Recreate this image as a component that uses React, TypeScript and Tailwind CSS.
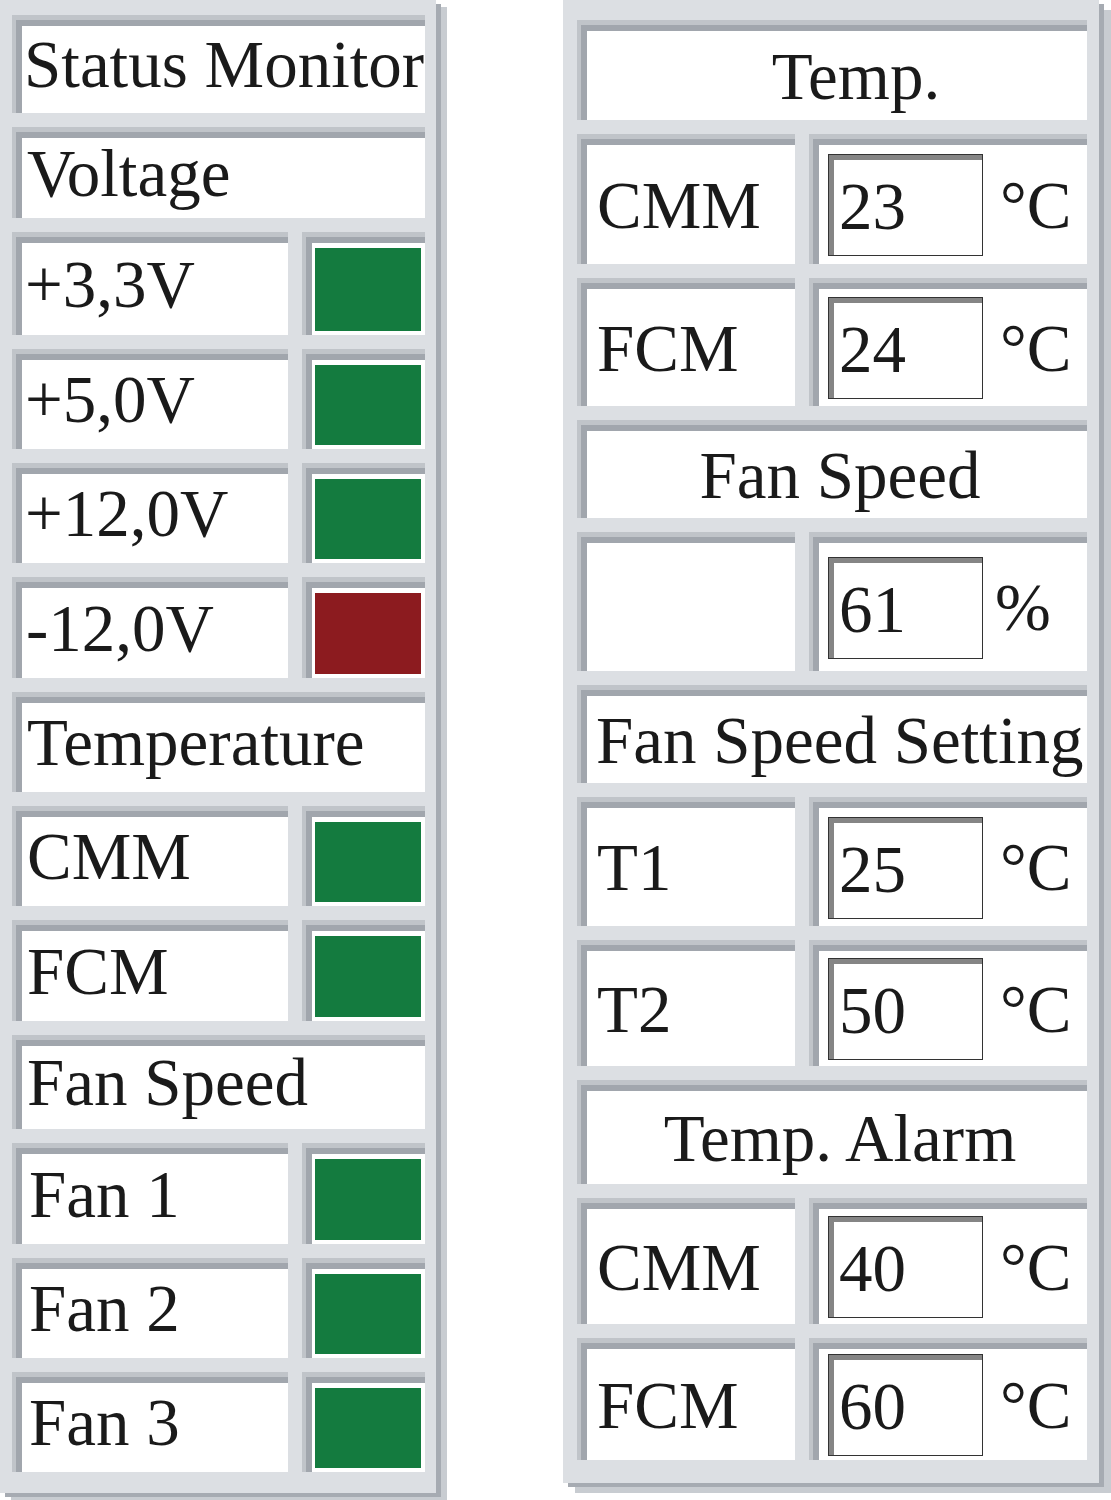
import React from 'react';

type LeftRow = { label: string; status?: 'ok' | 'fail'; h: string; pad?: string };

type RightRow =
  | { kind: 'header'; label: string; h: string; pad: string }
  | { kind: 'value'; label: string; value: string; unit: string; h: string };

const leftRows: LeftRow[] = [
  { label: 'Status Monitor', h: 'h-[98px]', pad: 'pl-[12px]' },
  { label: 'Voltage', h: 'h-[91px]' },
  { label: '+3,3V', status: 'ok', h: 'h-[103px]', pad: 'pl-[13px]' },
  { label: '+5,0V', status: 'ok', h: 'h-[100px]', pad: 'pl-[13px]' },
  { label: '+12,0V', status: 'ok', h: 'h-[100px]', pad: 'pl-[13px]' },
  { label: '-12,0V', status: 'fail', h: 'h-[101px]', pad: 'pl-[14px]' },
  { label: 'Temperature', h: 'h-[100px]' },
  { label: 'CMM', status: 'ok', h: 'h-[100px]' },
  { label: 'FCM', status: 'ok', h: 'h-[101px]' },
  { label: 'Fan Speed', h: 'h-[94px]' },
  { label: 'Fan 1', status: 'ok', h: 'h-[101px]', pad: 'pl-[17px]' },
  { label: 'Fan 2', status: 'ok', h: 'h-[100px]', pad: 'pl-[17px]' },
  { label: 'Fan 3', status: 'ok', h: 'h-[100px]', pad: 'pl-[17px]' },
];

const rightRows: RightRow[] = [
  { kind: 'header', label: 'Temp.', h: 'h-[100px]', pad: 'justify-center pl-[48px]' },
  { kind: 'value', label: 'CMM', value: '23', unit: '°C', h: 'h-[130px]' },
  { kind: 'value', label: 'FCM', value: '24', unit: '°C', h: 'h-[128px]' },
  { kind: 'header', label: 'Fan Speed', h: 'h-[98px]', pad: 'justify-center pl-[16px]' },
  { kind: 'value', label: '', value: '61', unit: '%', h: 'h-[139px]' },
  { kind: 'header', label: 'Fan Speed Setting', h: 'h-[98px]', pad: 'justify-start pl-[19px]' },
  { kind: 'value', label: 'T1', value: '25', unit: '°C', h: 'h-[129px]' },
  { kind: 'value', label: 'T2', value: '50', unit: '°C', h: 'h-[126px]' },
  { kind: 'header', label: 'Temp. Alarm', h: 'h-[104px]', pad: 'justify-center pl-[16px]' },
  { kind: 'value', label: 'CMM', value: '40', unit: '°C', h: 'h-[126px]' },
  { kind: 'value', label: 'FCM', value: '60', unit: '°C', h: 'h-[122px]' },
];

// white cell with the grey inset edge on top and left
const Cell: React.FC<{ className?: string; children?: React.ReactNode }> = ({ className = '', children }) => (
  <div className={`bg-white shadow-[inset_4px_5px_0_#c0c4c9,inset_10px_11px_0_#a1a6ad] ${className}`}>{children}</div>
);

const App: React.FC = () => {
  return (
    <div className="w-[1111px] h-[1500px] bg-white flex items-start font-['Liberation_Serif',serif] text-[#1a1a1a] text-[67px] leading-none">
      {/* Status monitor panel */}
      <div className="w-[436px] h-[1493px] bg-[#dcdfe3] shadow-[5px_4px_0_#a6abb2,11px_7px_0_#c8ccd1] pt-[15px] pl-[12px] pr-[11px] flex flex-col gap-[14px]">
        {leftRows.map((row, i) => (
          <div key={i} className={`flex gap-[14px] ${row.h}`}>
            <Cell className={`flex-1 flex items-center pt-[11px] pb-[10px] whitespace-nowrap ${row.pad ?? 'pl-[15px]'}`}>
              {row.label}
            </Cell>
            {row.status && (
              <Cell className="w-[123px] flex pl-[13px] pr-[4px] pt-[16px] pb-[4px]">
                <div className={`flex-1 ${row.status === 'ok' ? 'bg-[#147b3f]' : 'bg-[#8c1b1f]'}`} />
              </Cell>
            )}
          </div>
        ))}
      </div>

      {/* Settings panel */}
      <div className="ml-[127px] w-[536px] h-[1483px] bg-[#dcdfe3] shadow-[5px_4px_0_#a6abb2,12px_10px_0_#c8ccd1] pt-[20px] pl-[14px] pr-[12px] flex flex-col gap-[14px]">
        {rightRows.map((row, i) =>
          row.kind === 'header' ? (
            <Cell key={i} className={`${row.h} flex items-center pt-[12px] whitespace-nowrap overflow-hidden ${row.pad}`}>
              {row.label}
            </Cell>
          ) : (
            <div key={i} className={`flex gap-[14px] ${row.h}`}>
              <Cell className="w-[218px] flex items-center pl-[20px] pt-[12px]">{row.label}</Cell>
              <Cell className="flex-1 flex items-center pl-[19px] pt-[12px]">
                <div className="w-[155px] h-[102px] border border-[#333333] shadow-[inset_5px_5px_0_#858585] flex items-center pl-[10px] pt-[3px]">
                  {row.value}
                </div>
                <span className={row.unit === '%' ? 'ml-[12px]' : 'ml-[17px]'}>{row.unit}</span>
              </Cell>
            </div>
          )
        )}
      </div>
    </div>
  );
};

export default App;
